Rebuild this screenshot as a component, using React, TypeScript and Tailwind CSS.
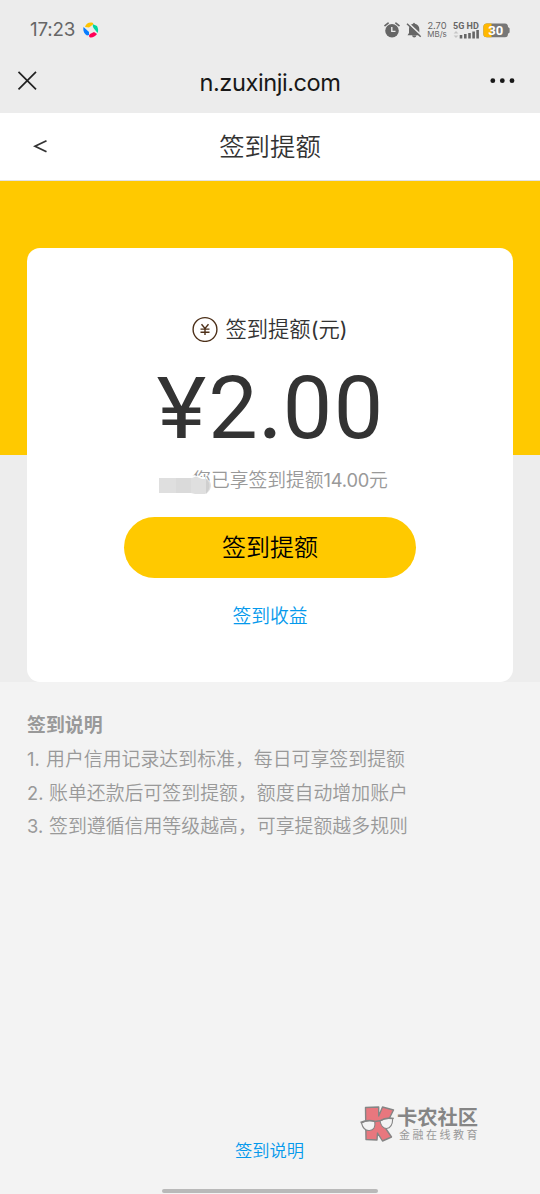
import React from "react";

const cjk = "font-['Roboto','Noto_Sans_CJK_SC',sans-serif]";

function StatusBar() {
  return (
    <div className="flex h-[60px] items-center pl-[30px] pr-[30px] text-[#666]">
      <span className="w-[52px] pt-px font-['Inter',sans-serif] text-[18.8px] leading-none tracking-[-0.2px]">17:23</span>
      <svg className="ml-px" width="16" height="16" viewBox="0 0 16 16">
        <path d="M2 5Q3 .5 8 .4Q11 .2 10 2.5L6 5.5Z" fill="#ffc400" />
        <path d="M10 2.2L14 4Q16 8 14.5 11L12.5 8.5Q9 5 10 2.2Z" fill="#00d6a0" />
        <path d="M14 12Q11 16 7 15.4Q5 14 7 12L11 10Z" fill="#ff0057" />
        <path d="M.5 5Q-.5 11 4 13.5L6 13L6 10Z" fill="#087cff" />
      </svg>
      <div className="flex-1" />
      <svg width="17" height="17" viewBox="0 0 17 17">
        <circle cx="8" cy="8.8" r="6.8" fill="#666" />
        <path d="M1 3.6L4.1 1.2M11.9 1.2L15 3.6" stroke="#666" strokeWidth="1.7" strokeLinecap="round" />
        <path d="M7.8 5.1V9.4H11.5" fill="none" stroke="#ececec" strokeWidth="1.4" />
      </svg>
      <svg className="ml-[5px]" width="16" height="17" viewBox="0 0 16 17">
        <path d="M1.5 13.2L3 11V7Q3 2.8 7 1.8Q8 -.2 9 1.8Q13.3 3 13.3 7V11L14.8 13.2ZM6 13.5H10.5Q10 15.6 8.2 15.6Q6.5 15.6 6 13.5Z" fill="#666" />
        <path d="M1.9 .8L15.4 13.4" stroke="#ececec" strokeWidth="1.8" />
        <path d="M1 1.7L14.7 14.7" stroke="#666" strokeWidth="1.5" />
      </svg>
      <div className="ml-[4px] flex w-[22px] flex-col items-center font-['Inter',sans-serif] leading-[8px]">
        <span className="text-[9.3px]">2.70</span>
        <span className="whitespace-nowrap text-[8px]">MB/s</span>
      </div>
      <div className="ml-[5px] w-[27px]">
        <div className="whitespace-nowrap font-['Roboto',sans-serif] text-[9px] font-bold leading-[8px]">5G HD</div>
        <svg width="26" height="9" viewBox="0 0 26 9">
          <path d="M.6 3.5L3 1L5.4 3.5ZM.6 5.5L3 8L5.4 5.5Z" fill="#c5c5c5" />
          <path d="M8 5v3.5M12.3 4v4.5M16.5 3v5.5M20.6 1.6v6.9M24.6 0v8.5" stroke="#666" strokeWidth="2.6" />
        </svg>
      </div>
      <svg className="ml-[3px]" width="27" height="15" viewBox="0 0 27 15">
        <path d="M4 .5H22Q25 .5 25 4L26.6 5.3V9.4L25 10.8Q25 14.3 22 14.3H4Q.4 14.3.4 11V4Q.4.5 4 .5Z" fill="#777" />
        <path d="M4 .5H8.5V14.3H4Q.4 14.3.4 11V4Q.4.5 4 .5Z" fill="#ffb800" />
        <text x="12.8" y="12" textAnchor="middle" fontFamily="Roboto, sans-serif" fontSize="13" fontWeight="700" fill="#fff">30</text>
      </svg>
    </div>
  );
}

function BrowserBar() {
  return (
    <div className="grid h-[53px] grid-cols-[80px_1fr_80px] items-start">
      <svg className="ml-[17px] mt-[10px]" width="21" height="21" viewBox="0 0 21 21">
        <path d="M1.5 1.8L19 19.3M19 1.8L1.5 19.3" stroke="#222" strokeWidth="1.7" />
      </svg>
      <span className="pt-[8px] text-center font-['Inter',sans-serif] text-[23.6px] leading-[29px] tracking-[-0.45px] text-[#181818]">n.zuxinji.com</span>
      <svg className="ml-[28px] mt-[16px]" width="30" height="9" viewBox="0 0 30 9">
        <circle cx="4.8" cy="4.7" r="2.4" fill="#181818" />
        <circle cx="14.3" cy="4.7" r="2.4" fill="#181818" />
        <circle cx="24" cy="4.7" r="2.4" fill="#181818" />
      </svg>
    </div>
  );
}

function Watermark() {
  return (
    <div className="flex h-[38px] items-start pt-[2px]">
      <svg className="shrink-0" width="36" height="38" viewBox="0 0 36 38">
        <path d="M5.5 1.5L18.7 1L18.7 10L22.5 1L33.5 4L26.5 18L24 20L31.5 31L22.5 35L17.5 27L17 34L6 33.5Z" fill="#e8777e" stroke="#858585" strokeWidth="1.4" strokeLinejoin="round" />
        <path d="M1.5 17Q8 13.5 14.8 15.5Q16 24 9.5 24.5Q3.5 25 1.5 17Z" fill="#f3f3f3" stroke="#858585" strokeWidth="1.1" />
        <path d="M20 15Q25 11.5 32.7 12.8Q32.5 22 26.5 22.5Q21.5 22.5 20 15Z" fill="#f3f3f3" stroke="#858585" strokeWidth="1.1" />
        <path d="M.5 16.5Q8 13 15 15.5L19.8 14.8Q26 11 33.8 12.4" fill="none" stroke="#858585" strokeWidth="1.4" />
      </svg>
      <div className={`${cjk} ml-px whitespace-nowrap text-[#858585]`}>
        <div className="text-[20.3px] font-bold leading-[24px]">卡农社区</div>
        <div className="ml-[2px] text-[11px] leading-[12px] tracking-[2.5px] text-[#999]">金融在线教育</div>
      </div>
    </div>
  );
}

const rules = [
  { n: "1.", text: "用户信用记录达到标准，每日可享签到提额", indent: "w-[19px]" },
  { n: "2.", text: "账单还款后可签到提额，额度自动增加账户", indent: "w-[22px]" },
  { n: "3.", text: "签到遵循信用等级越高，可享提额越多规则", indent: "w-[22px]" },
];

export default function App() {
  return (
    <main className={`${cjk} flex h-[1194px] w-[540px] flex-col overflow-hidden bg-[#f3f3f3]`}>
      <header className="h-[113px] shrink-0 bg-[#ececec]">
        <StatusBar />
        <BrowserBar />
      </header>
      <nav className="grid h-[68px] shrink-0 grid-cols-[80px_1fr_80px] items-center border-b border-[#e2e2e2] bg-white text-[#333]">
        <svg className="ml-[33px]" width="15" height="15" viewBox="0 0 15 15">
          <path d="M13.5 1.8L2 7.2L13.5 12.8" fill="none" stroke="#333" strokeWidth="1.8" />
        </svg>
        <h1 className="pt-px text-center text-[25.4px] font-[350] leading-[36px]">签到提额</h1>
      </nav>
      <section className="h-[501px] shrink-0 bg-[linear-gradient(#ffc900_274px,#ededed_274px)] px-[27px] pt-[67px]">
        <div className="flex h-[434px] flex-col items-center rounded-[13px] bg-white text-[#333]">
          <div className="mt-[64px] flex h-[34px] items-center">
            <svg className="mr-[7px]" width="26" height="26" viewBox="0 0 26 26">
              <circle cx="13" cy="13.5" r="11.9" fill="none" stroke="#4d3019" strokeWidth="1.4" />
              <path d="M9.5 8.2L13 12.5L16.5 8.2M8.5 13.1H17.5M8.5 16.2H17.5M13 12.5V19" fill="none" stroke="#4d3019" strokeWidth="1.4" />
            </svg>
            <span className="whitespace-nowrap text-[21.3px] font-[350] leading-[32px]">签到提额<span className="font-['Inter'] font-normal">(</span>元<span className="font-['Inter'] font-normal">)</span></span>
          </div>
          <div className="mt-[10px] flex h-[96px] w-[230px] items-baseline whitespace-nowrap text-[88px] leading-[96px]">
            <span className="flex w-[53px] scale-x-110 justify-center font-['Inter'] text-[84px]">¥</span>
            <span className="w-[50px] text-center">2</span>
            <span className="w-[24px] text-center font-['Lato']">.</span>
            <span className="w-[51px] text-center">0</span>
            <span className="w-[51px] text-center">0</span>
          </div>
          <div className="relative mt-[14px] ml-[40px] h-[28px] whitespace-nowrap text-[18.8px] font-[350] leading-[28px] text-[#999]">
            您已享签到提额<span className="font-['Inter'] text-[18.3px] font-normal tracking-[-0.2px]">14.00</span>元
            <svg className="absolute -left-[33px] top-[9px]" width="53" height="19" viewBox="0 0 53 19">
              <path d="M30 3L35 0L40 2H46V17H30Z" fill="#fff" />
              <path d="M0 3H33L37 1.5L43 4H48Q52 6 52 11Q51 17 46 19H36L32 18H0Z" fill="#dfdfdf" />
              <path d="M17 3H32V18H17Z" fill="#dadada" />
              <path d="M47 4Q54 10 47 19Z" fill="#cfcfcf" />
            </svg>
          </div>
          <button className="mt-[23px] h-[61px] w-[292px] shrink-0 rounded-full bg-[#ffc900] pt-[2px] text-[24px] font-[350] leading-[59px] text-black">签到提额</button>
          <a className="mt-[25px] text-[18.8px] font-[350] leading-[28px] text-[#0499ec]">签到收益</a>
        </div>
      </section>
      <section className="ml-[27px] mt-[27px] text-[18.9px] font-[350] text-[#999]">
        <h2 className="h-[34px] font-bold leading-[34px]">签到说明</h2>
        {rules.map((rule) => (
          <p key={rule.n} className="flex h-[33.7px] whitespace-nowrap leading-[33.7px]">
            <span className={`${rule.indent} shrink-0 font-['Inter'] text-[18.3px] font-normal`}>{rule.n}</span>
            {rule.text}
          </p>
        ))}
      </section>
      <div className="flex-1" />
      <footer className="grid h-[90px] shrink-0 grid-cols-[235px_125px_1fr]">
        <a className="col-start-2 mt-[34px] text-[17.3px] font-[350] leading-[26px] text-[#0499ec]">签到说明</a>
        <Watermark />
        <div className="col-span-3 ml-[162px] h-[4px] w-[216px] self-end rounded-full bg-[#b9b9b9] mb-[1px]" />
      </footer>
    </main>
  );
}
